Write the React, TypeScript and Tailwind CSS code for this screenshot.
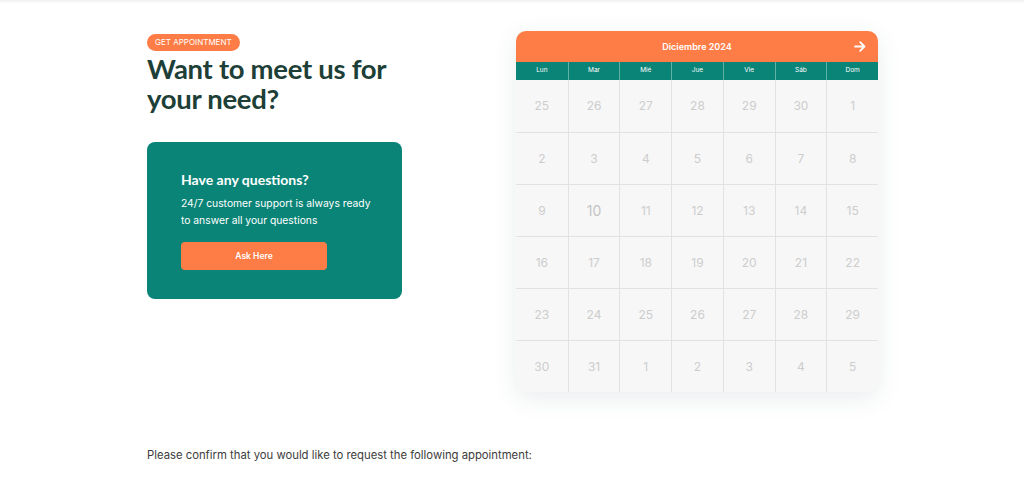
import React from "react";

const days = ["Lun", "Mar", "Mié", "Jue", "Vie", "Sáb", "Dom"];
const nums = [
  25, 26, 27, 28, 29, 30, 1,
  2, 3, 4, 5, 6, 7, 8,
  9, 10, 11, 12, 13, 14, 15,
  16, 17, 18, 19, 20, 21, 22,
  23, 24, 25, 26, 27, 28, 29,
  30, 31, 1, 2, 3, 4, 5,
];

export default function App() {
  return (
    <div className="w-[1024px] h-[479px] bg-white overflow-hidden relative" style={{ fontFamily: "Inter, 'Noto Sans', sans-serif" }}>
      <div className="h-[4px] bg-gradient-to-b from-[#f1f1f3] to-white" />
      <div className="ml-[147px] pt-[27px] flex gap-[114px]">
        <div className="w-[255px] flex flex-col">
          <div className="mt-[3px] self-start h-[17px] px-[8px] rounded-full bg-[#fe7c45] text-white text-[8px] leading-[17px]">
            GET APPOINTMENT
          </div>
          <h1 className="mt-[3px] text-[27.5px] leading-[30px] text-[#1d3f37] tracking-[-0.3px]" style={{ fontFamily: "Lato, Inter, sans-serif", fontWeight: 700 }}>
            Want to meet us for<br />your need?
          </h1>
          <div className="mt-[28px] h-[157px] rounded-[8px] bg-[#0a8477] pl-[34px] pt-[29px]">
            <div className="text-white text-[14px] leading-[18px]" style={{ fontFamily: "Lato, Inter, sans-serif", fontWeight: 700 }}>Have any questions?</div>
            <div className="mt-[6px] text-white text-[10.3px] leading-[16.5px]">
              24/7 customer support is always ready<br />to answer all your questions
            </div>
            <div className="mt-[14px] w-[146px] h-[28px] rounded-[4px] bg-[#fe7c45] text-white text-[8.5px] font-semibold flex items-center justify-center">
              Ask Here
            </div>
          </div>
        </div>
        <div className="w-[362px] rounded-[10px] bg-[#f7f7f7] shadow-[0_6px_24px_rgba(40,80,90,0.10)]">
          <div className="h-[31px] rounded-t-[10px] bg-[#fe7c45] relative flex items-center justify-center">
            <span className="text-white text-[9px] font-semibold">Diciembre 2024</span>
            <svg className="absolute right-[12px] top-[10px]" width="12" height="11" viewBox="0 0 12 11" fill="none">
              <path d="M1 5.5h9.5M6.2 1.2l4.3 4.3-4.3 4.3" stroke="white" strokeWidth="1.8" strokeLinecap="round" strokeLinejoin="round" />
            </svg>
          </div>
          <div className="grid grid-cols-7 h-[18px] bg-[#0a8477]">
            {days.map((d, i) => (
              <div key={d} className={`flex items-center justify-center text-white text-[6.5px] ${i > 0 ? "border-l border-[#5fb0a8]" : ""}`}>
                {d}
              </div>
            ))}
          </div>
          <div className="grid grid-cols-7">
            {nums.map((n, i) => (
              <div
                key={i}
                className={`h-[52px] flex items-center justify-center ${i % 7 > 0 ? "border-l border-[#e2e2e2]" : ""} ${i >= 7 ? "border-t border-[#e2e2e2]" : ""} ${i === 15 ? "text-[14px] text-[#c4c4c4]" : "text-[12px] text-[#cdcdcd]"}`}
              >
                {n}
              </div>
            ))}
          </div>
        </div>
      </div>
      <div className="ml-[147px] mt-[55px] text-[11.3px] text-[#3c3c3c]">
        Please confirm that you would like to request the following appointment:
      </div>
    </div>
  );
}
